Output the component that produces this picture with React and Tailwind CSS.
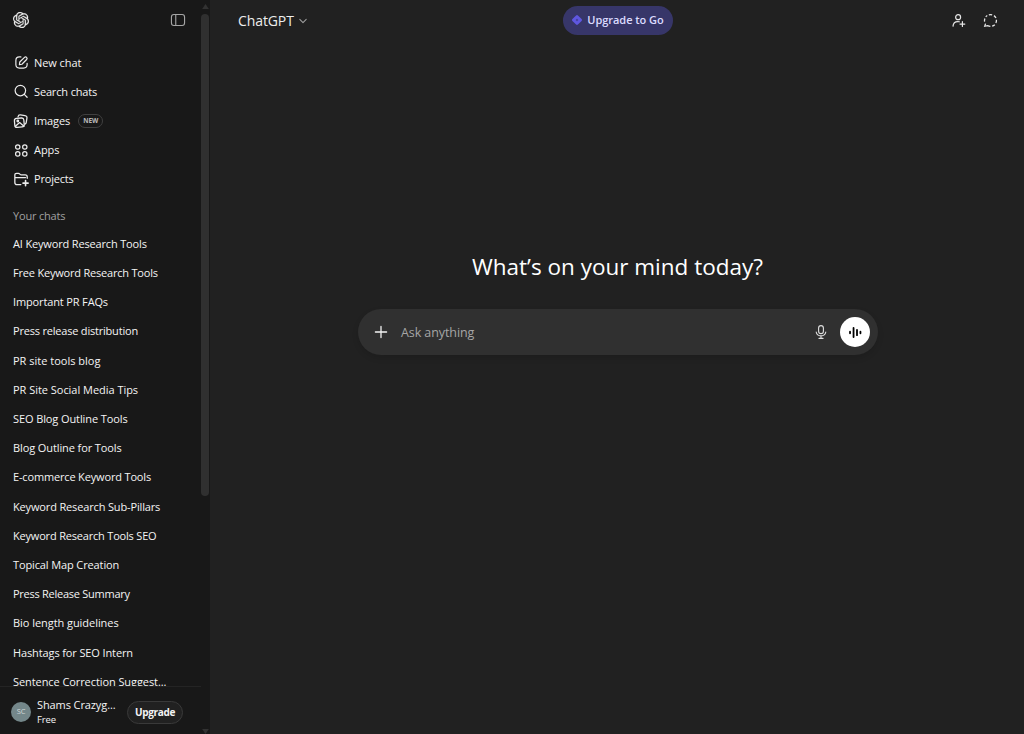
import React from "react";
import { SiOpenai } from "react-icons/si";

const base = {
  fill: "none",
  stroke: "currentColor",
  strokeLinecap: "round",
  strokeLinejoin: "round",
};

function Icon({ className, children, width = 1.7 }) {
  return (
    <svg viewBox="0 0 20 20" className={className} strokeWidth={width} {...base}>
      {children}
    </svg>
  );
}

const icons = {
  newChat: (
    <>
      <path d="M9.200 2.500H7.200C4.200 2.500 2.500 4.200 2.500 7.200v5.600c0 3 1.700 4.700 4.700 4.700h5.600c3 0 4.700-1.700 4.700-4.700v-1.800" />
      <path d="M7.200 12.800l.5-3.400 6.300-6.200a1.900 1.900 0 0 1 2.800 2.800l-6.200 6.300z" />
    </>
  ),
  search: (
    <>
      <circle cx="8.500" cy="8.700" r="7" />
      <path d="M13.700 13.900L17.500 17.700" />
    </>
  ),
  images: (
    <>
      <path d="M6.300 4.700c.3-1.700 1.300-2.500 3-2.300l5.600.8c1.900.3 2.800 1.400 2.500 3.200l-.8 5.300c-.2 1.100-.7 1.800-1.700 2.100" />
      <rect x="2" y="6.500" width="11.800" height="11.200" rx="2.800" transform="rotate(-5 8 12)" />
      <circle cx="6" cy="10" r="1" />
      <path d="M3 16.500l5.300-4.500 5.400 4.500" />
    </>
  ),
  apps: (
    <>
      <circle cx="5" cy="5.300" r="2.900" />
      <circle cx="14.400" cy="5.300" r="2.900" />
      <circle cx="5" cy="14.500" r="2.900" />
      <circle cx="14.400" cy="14.500" r="2.900" />
    </>
  ),
  projects: (
    <>
      <path d="M9.800 17H5c-1.700 0-2.700-1-2.700-2.700V5.200C2.300 3.700 3.100 3 4.500 3h2.300c1.800 0 1.800 1.900 3.600 1.900h4.800c1.700 0 2.600.9 2.600 2.600v1.700M2.300 8.200h13.400" />
      <path d="M15.700 12v6.400M12.500 15.200h6.400" strokeWidth="2" />
    </>
  ),
};

const menu = [
  { icon: "newChat", label: "New chat", cls: "tracking-[-0.06px] pt-[1px]", size: "size-[15px]" },
  { icon: "search", label: "Search chats", cls: "tracking-[-0.15px]", size: "size-[15px]" },
  { icon: "images", label: "Images", badge: "NEW", cls: "tracking-[-0.1px]", size: "size-[16px]" },
  { icon: "apps", label: "Apps", cls: "tracking-[-0.05px]", size: "size-[15px]" },
  { icon: "projects", label: "Projects", cls: "tracking-[-0.18px]", size: "size-[16px]" },
];

const chats = [
  { title: "AI Keyword Research Tools", cls: "tracking-[-0.16px]" },
  { title: "Free Keyword Research Tools", cls: "tracking-[-0.2px]" },
  { title: "Important PR FAQs", cls: "tracking-[-0.14px]" },
  { title: "Press release distribution", cls: "tracking-[-0.2px]" },
  { title: "PR site tools blog", cls: "tracking-[0px]" },
  { title: "PR Site Social Media Tips", cls: "tracking-[-0.03px]" },
  { title: "SEO Blog Outline Tools", cls: "tracking-[-0.1px]" },
  { title: "Blog Outline for Tools", cls: "tracking-[-0.1px]" },
  { title: "E-commerce Keyword Tools", cls: "tracking-[-0.16px]" },
  { title: "Keyword Research Sub-Pillars", cls: "tracking-[-0.15px]" },
  { title: "Keyword Research Tools SEO", cls: "tracking-[-0.19px]" },
  { title: "Topical Map Creation", cls: "tracking-[-0.12px]" },
  { title: "Press Release Summary", cls: "tracking-[-0.26px]" },
  { title: "Bio length guidelines", cls: "tracking-[-0.05px]" },
  { title: "Hashtags for SEO Intern", cls: "tracking-[-0.12px]" },
  { title: "Sentence Correction Suggest...", cls: "tracking-[-0.08px]" },
];

function Sidebar() {
  return (
    <aside className="flex h-full w-[210px] shrink-0 bg-[#181818]">
      <div className="flex h-full w-[201px] flex-col">
        <div className="flex min-h-0 flex-1 flex-col overflow-hidden">
          <header className="flex h-[40px] shrink-0 items-center justify-between pr-[15px] pl-[13px]">
            <SiOpenai className="size-[16px] stroke-[#ececec] stroke-[0.4px] text-[#ececec]" />
            <Icon className="size-[16px] text-[#a5a5a5]" width={1.4}>
              <rect x="1.800" y="3.200" width="16.400" height="13.600" rx="3" />
              <path d="M7.200 3.200v13.600" />
            </Icon>
          </header>
          <nav className="mt-[8px] shrink-0">
            {menu.map((m) => (
              <div key={m.label} className="flex h-[29.2px] items-center pl-[13px]">
                <span className="flex size-[16px] shrink-0 items-center justify-center text-[#ececec]">
                  <Icon className={m.size} width={1.6}>{icons[m.icon]}</Icon>
                </span>
                <span className={"ml-[5px] " + m.cls}>{m.label}</span>
                {m.badge && (
                  <span className="ml-2 flex h-[14px] w-[25px] items-center justify-center rounded-full border border-[#404040] text-[6.5px] font-bold text-[#b8b8b8]">
                    {m.badge}
                  </span>
                )}
              </div>
            ))}
          </nav>
          <h2 className="mt-[10px] flex h-[25px] shrink-0 items-center pl-[13px] tracking-[-0.18px] text-[#a0a0a0]">Your chats</h2>
          <ul className="shrink-0 pt-[0.6px]">
            {chats.map((c) => (
              <li key={c.title} className={"flex h-[29.2px] items-center pl-[13px] whitespace-nowrap " + c.cls}>
                {c.title}
              </li>
            ))}
          </ul>
        </div>
        <footer className="flex h-[48px] shrink-0 items-center border-t border-[#242424] pt-[3px] pl-[11px]">
          <div className="flex size-[20px] items-center justify-center rounded-full bg-[#74878a] text-[7.5px] text-[#d0d7d8]">
            SC
          </div>
          <div className="ml-[6px] w-[84px] leading-[15px] whitespace-nowrap">
            <div>Shams Crazyg...</div>
            <div className="text-[9.5px] font-medium">Free</div>
          </div>
          <button className="ml-[6px] flex h-[23px] w-[56px] items-center justify-center rounded-full border border-[#393939] bg-[#212121] text-[10px] font-bold tracking-[-0.35px]">
            Upgrade
          </button>
        </footer>
      </div>
      <div className="flex w-[8px] flex-col items-center pt-[4px]">
        <svg viewBox="0 0 8 6" className="h-[5px] w-[7px] fill-[#323232]">
          <path d="M4 0l4 6H0z" />
        </svg>
        <div className="mt-[5px] h-[482px] w-[8px] rounded-full bg-[#303030]" />
        <svg viewBox="0 0 8 6" className="mt-auto h-[5px] w-[7px] fill-[#323232]">
          <path d="M4 6l4-6H0z" />
        </svg>
      </div>
    </aside>
  );
}

function TopBar() {
  return (
    <header className="grid h-[40px] shrink-0 grid-cols-3 items-center pr-[26px] pl-[28px]">
      <div className="flex items-center pt-[1px] text-[14px] tracking-[-0.1px] text-[#ededed]">
        ChatGPT
        <svg viewBox="0 0 10 6" className="mt-[1px] ml-[5px] h-[6px] w-[8px] text-[#a0a0a0]" strokeWidth="1.3" {...base}>
          <path d="M1 1l4 4 4-4" />
        </svg>
      </div>
      <button className="flex h-[29px] w-[110px] items-center justify-center gap-[4px] justify-self-center rounded-full bg-[#373669] pr-[1px] text-[11px] font-semibold tracking-[-0.05px] whitespace-nowrap text-[#dcdcff]">
        <svg viewBox="0 0 12 12" className="size-[12px]">
          <rect x="2.100" y="2.100" width="7.800" height="7.800" rx="1.300" transform="rotate(45 6 6)" fill="#5f57e0" />
          <path d="M6 4.500l.4 1.100 1.100.4-1.100.4L6 7.500l-.4-1.100L4.500 6l1.100-.4z" fill="#38367b" />
        </svg>
        Upgrade to Go
      </button>
      <div className="flex items-center justify-end gap-[17px] text-[#e6e6e6]">
        <Icon className="size-[15px]" width={1.6}>
          <circle cx="9.500" cy="5.500" r="3.300" />
          <path d="M2.700 17.500c.3-4 2.500-6.100 6.300-6.100.8 0 1.500.1 2.100.3M15.200 11.500v6.400M12 14.700h6.400" />
        </Icon>
        <svg viewBox="0 0 20 20" className="size-[15px]" fill="none" stroke="currentColor" strokeWidth="1.700">
          <path d="M7.800 2.400a8 8 0 0 1 4.400 0M14.600 3.500a8 8 0 0 1 2.700 3.300M17.900 9a8 8 0 0 1-.7 4.400M15.700 15.600a8 8 0 0 1-3.500 2M9.800 17.900a8 8 0 0 1-3.700-1l-3.800.8 1.100-3.600M2.100 11.500a8 8 0 0 1 .4-4.300M3.700 5.200A8 8 0 0 1 5.700 3.400" />
        </svg>
      </div>
    </header>
  );
}

export default function App() {
  return (
    <div className="flex h-[734px] w-[1024px] overflow-hidden bg-[#212121] font-['Open_Sans','Noto_Sans',sans-serif] text-[11px] tracking-[-0.1px] text-[#f4f4f4]">
      <Sidebar />
      <main className="flex min-w-0 flex-1 flex-col">
        <TopBar />
        <section className="flex flex-col items-center pt-[210px] pl-[2px]">
          <h1 className="h-[34px] pr-[1px] text-[22.5px] leading-[34px] tracking-[0px] whitespace-nowrap text-white">What’s on your mind today?</h1>
          <div className="mt-[25px] flex h-[46px] w-[520px] items-center rounded-full bg-[#303030] pr-[8px] pl-[15px] shadow-[0_3px_6px_rgba(0,0,0,0.12)]">
            <Icon className="size-[16px]" width={1.6}>
              <path d="M10 3v14M3 10h14" />
            </Icon>
            <span className="ml-[12px] flex-1 pt-[2px] text-[12.5px] tracking-[-0.08px] text-[#a6a6a6]">Ask anything</span>
            <Icon className="size-[16px] text-[#dedede]" width={1.4}>
              <rect x="7" y="2" width="6" height="10" rx="3" />
              <path d="M4 10c.6 3.200 2.700 4.900 6 4.900s5.400-1.700 6-4.900M10 15v3M7.500 18h5" />
            </Icon>
            <div className="ml-[11px] flex size-[30px] items-center justify-center rounded-full bg-white text-black">
              <Icon className="size-[15px]" width={2.4}>
                <path d="M2.700 9v2M7.400 4v12M12 6.500v7M16.600 9v2" />
              </Icon>
            </div>
          </div>
        </section>
      </main>
    </div>
  );
}
